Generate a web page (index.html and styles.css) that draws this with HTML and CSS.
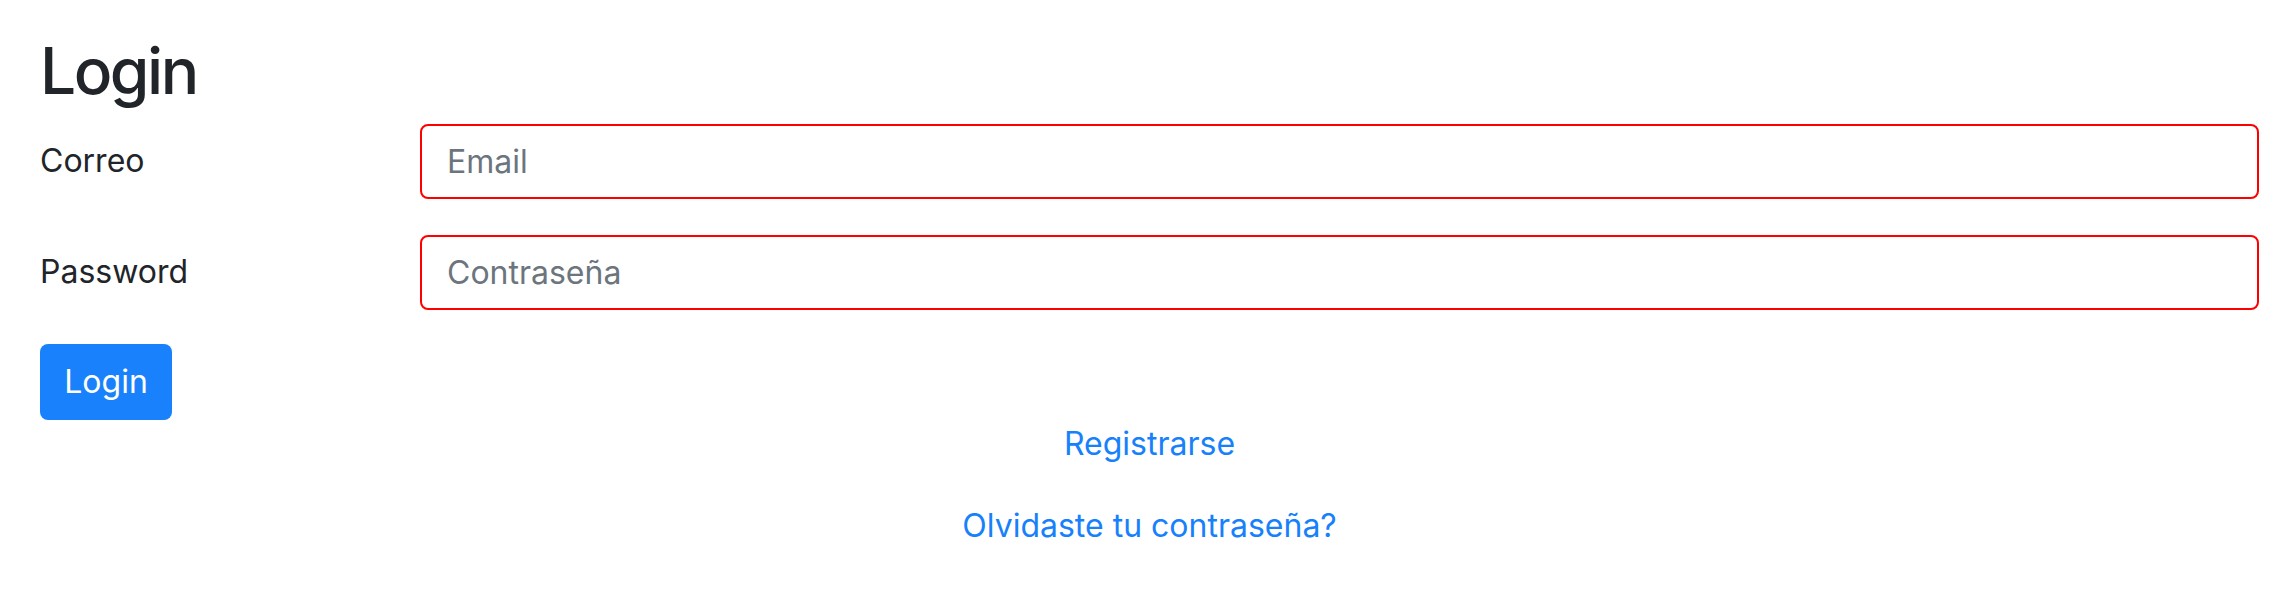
FILE: index.html
```html
<!DOCTYPE html>
<html lang="es">
<head>
<meta charset="utf-8">
<title>Login</title>
<link rel="stylesheet" href="styles.css">
</head>
<body>
<main class="page">
  <h2 class="title">Login</h2>
  <form class="login-form">
    <div class="form-row">
      <label class="form-label" for="email">Correo</label>
      <input class="form-input" id="email" type="email" placeholder="Email">
    </div>
    <div class="form-row">
      <label class="form-label" for="pass">Password</label>
      <input class="form-input" id="pass" type="password" placeholder="Contraseña">
    </div>
    <button class="btn-primary" type="button">Login</button>
  </form>
  <div class="links">
    <p class="link-line"><a class="link" href="#">Registrarse</a></p>
    <p class="link-line"><a class="link" href="#">Olvidaste tu contraseña?</a></p>
  </div>
</main>
</body>
</html>
```
FILE: styles.css
```css
* { box-sizing: border-box; }
html, body { margin: 0; padding: 0; background: #fff; }
body {
  font-family: Inter, "Noto Sans", "Liberation Sans", sans-serif;
  font-size: 32px;
  line-height: 1.5;
  color: #212529;
}
.page {
  padding: 33px 37px 0 40px;
}
.title {
  margin: 0 0 14px 0;
  font-size: 64px;
  font-weight: 500;
  line-height: 1.2;
  letter-spacing: -2.5px;
}
.login-form {
  display: flex;
  flex-direction: column;
  align-items: flex-start;
}
.form-row {
  display: grid;
  grid-template-columns: 380px 1fr;
  align-items: center;
  width: 100%;
  margin-bottom: 36px;
}
.form-row:nth-of-type(2) { margin-bottom: 34px; }
.form-label {
  font-size: 32px;
  line-height: 1.5;
}
.form-input {
  height: 75px;
  width: 100%;
  padding: 0 25px;
  font-family: inherit;
  font-size: 32px;
  color: #495057;
  background: #fff;
  border: 2px solid #ff0000;
  border-radius: 8px;
  outline: none;
}
.form-input::placeholder { color: #6c757d; opacity: 1; }
.btn-primary {
  height: 76px;
  width: 132px;
  padding: 0;
  font-family: inherit;
  font-size: 32px;
  color: #fff;
  background: #1981fb;
  border: none;
  border-radius: 8px;
}
.links {
  text-align: center;
}
.link-line {
  margin: 0 0 34px 0;
}
.link {
  color: #1781fb;
  text-decoration: none;
}
```
